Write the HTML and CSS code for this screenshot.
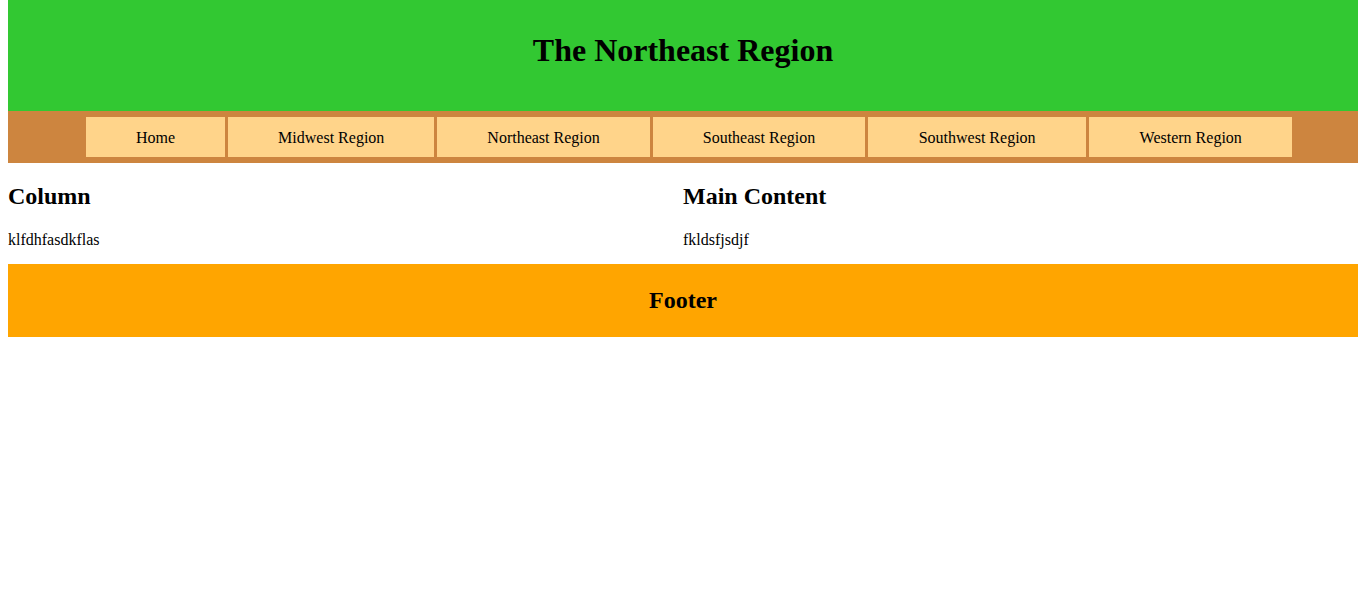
FILE: index.html
```html
<!DOCTYPE html>
<html lang="en">
<head>
<meta charset="utf-8">
<title>The Northeast Region</title>
<link rel="stylesheet" href="styles.css">
</head>
<body>
<header class="site-header">
  <h1 class="site-title">The Northeast Region</h1>
</header>
<nav class="site-nav">
  <ul class="nav-list">
    <li class="nav-item"><a href="#">Home</a></li>
    <li class="nav-item"><a href="#">Midwest Region</a></li>
    <li class="nav-item"><a href="#">Northeast Region</a></li>
    <li class="nav-item"><a href="#">Southeast Region</a></li>
    <li class="nav-item"><a href="#">Southwest Region</a></li>
    <li class="nav-item"><a href="#">Western Region</a></li>
  </ul>
</nav>
<div class="content">
  <section class="column">
    <h2 class="section-title">Column</h2>
    <p class="section-text">klfdhfasdkflas</p>
  </section>
  <main class="column">
    <h2 class="section-title">Main Content</h2>
    <p class="section-text">fkldsfjsdjf</p>
  </main>
</div>
<footer class="site-footer">
  <h2 class="footer-title">Footer</h2>
</footer>
</body>
</html>
```

FILE: styles.css
```css
html, body {
  background: #ffffff;
}

body {
  margin: 0 8px;
  font-family: "Liberation Serif", "Times New Roman", serif;
  font-size: 16px;
  color: #000000;
}

.site-header {
  background: #32c832;
  height: 111px;
  box-sizing: border-box;
  padding-top: 32px;
  text-align: center;
}

.site-title {
  margin: 0;
  font-size: 32px;
  font-weight: bold;
}

.site-nav {
  background: #cd853f;
  padding: 6px 0 6px 78px;
}

.nav-list {
  list-style: none;
  margin: 0;
  padding: 0;
  display: flex;
  gap: 3px;
}

.nav-item {
  background: #ffd48a;
  height: 40px;
  box-sizing: border-box;
  padding: 1px 50px 0;
  display: flex;
  align-items: center;
  justify-content: center;
}

.nav-item:nth-child(5),
.nav-item:nth-child(6) {
  padding-right: 50.5px;
  padding-left: 50.5px;
}

.nav-item a {
  color: #000000;
  text-decoration: none;
}

.content {
  display: grid;
  grid-template-columns: 1fr 1fr;
}

.section-title {
  font-size: 24px;
  margin: 20px 0 21px;
}

.section-text {
  margin: 16px 0 15px;
}

.site-footer {
  background: #ffa500;
  text-align: center;
  padding: 23px 0;
}

.footer-title {
  margin: 0;
  font-size: 24px;
}
```
